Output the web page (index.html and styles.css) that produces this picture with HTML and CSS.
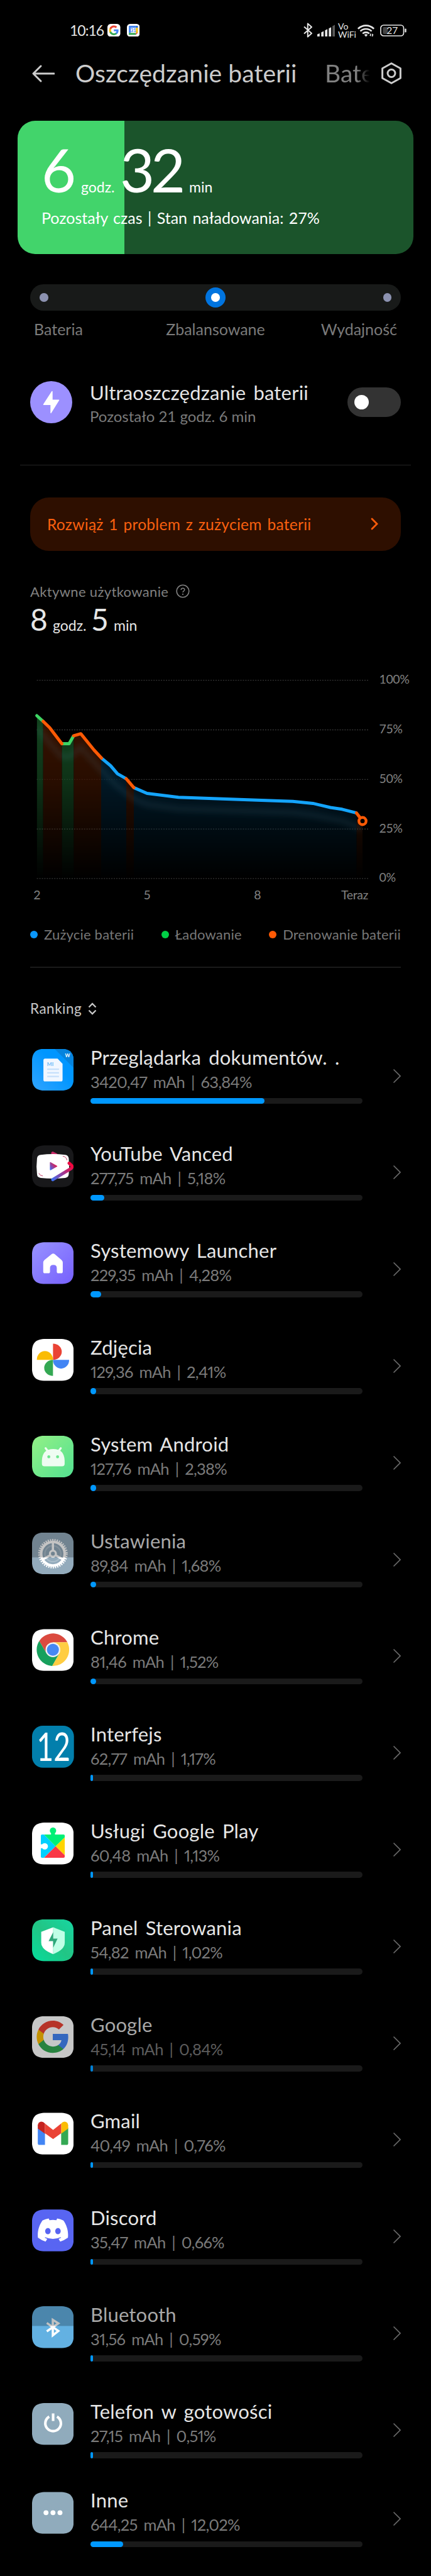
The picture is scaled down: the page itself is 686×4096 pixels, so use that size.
FILE: index.html
```html
<!DOCTYPE html>
<html lang="pl">
<head>
  <meta charset="UTF-8" />
  <title>Oszczędzanie baterii</title>
  <link rel="stylesheet" href="styles.css">
</head>
<body>
  <!-- Shared shapes -->
  <svg class="defs" width="0" height="0">
    <defs>
      <symbol id="chevron" viewBox="0 0 12 22"><path d="M1 1l10 10L1 21" fill="none" stroke="currentColor" stroke-width="1.7" stroke-linecap="round"/></symbol>
      <symbol id="google" viewBox="0 0 48 48">
        <path fill="#4285f4" d="M45.12 24.5c0-1.56-.14-3.06-.4-4.5H24v8.51h11.84c-.51 2.75-2.06 5.08-4.39 6.64v5.52h7.11c4.16-3.83 6.56-9.47 6.56-16.17z"/>
        <path fill="#34a853" d="M24 46c5.94 0 10.92-1.97 14.56-5.33l-7.11-5.52c-1.97 1.32-4.49 2.1-7.45 2.1-5.73 0-10.58-3.87-12.31-9.07H4.34v5.7C7.96 41.07 15.4 46 24 46z"/>
        <path fill="#fbbc05" d="M11.69 28.18C11.25 26.86 11 25.45 11 24s.25-2.86.69-4.18v-5.7H4.34C2.85 17.09 2 20.45 2 24s.85 6.91 2.34 9.88l7.35-5.7z"/>
        <path fill="#ea4335" d="M24 10.75c3.23 0 6.13 1.11 8.41 3.29l6.31-6.31C34.91 4.18 29.93 2 24 2 15.4 2 7.96 6.93 4.34 14.12l7.35 5.7c1.73-5.2 6.58-9.07 12.31-9.07z"/>
      </symbol>
    </defs>
  </svg>

  <!-- Status bar -->
  <div class="statusbar">
    <span class="clock">10:16</span>
    <svg class="notif" viewBox="0 0 20 20"><rect width="20" height="20" rx="5" fill="#fff"/><use href="#google" x="1.8" y="1.8" width="16.4" height="16.4"/></svg>
    <svg class="notif notif-cal" viewBox="0 0 20 20"><rect width="20" height="20" rx="5" fill="#fff"/><path fill="#4285f4" d="M3 3h11v3H6v8H3z"/><path fill="#1a67d2" d="M14 3h3v3h-3z"/><path fill="#fbbc04" d="M14 6h3v8h-3z"/><path fill="#34a853" d="M3 14h11v3H3z"/><path fill="#ea4335" d="M14 14h3l-3 3z"/><text x="10" y="12.8" class="cal-day">31</text></svg>
    <div class="status-icons">
      <svg class="s-bt" viewBox="0 0 14 24"><path d="M1 6.5l12 10.5-6.2 5.5V1.5L13 7 1 17.5" fill="none" stroke="#e6e6e6" stroke-width="2" stroke-linejoin="round"/></svg>
      <svg class="s-signal" viewBox="0 0 28 19"><path fill="#e6e6e6" d="M0 15.5l3.8-1.6V19H0zM6.3 12.5l3.8-2V19H6.3zM12.3 9.3l3.8-2V19h-3.8zM18.3 6.2l3.8-2V19h-3.8z"/><path fill="#5a5a5a" d="M24.2 2.5L28 .5V19h-3.8z"/></svg>
      <div class="s-vo"><span>Vo</span><span>WiFi</span></div>
      <svg class="s-wifi" viewBox="0 0 27 21"><g fill="none" stroke="#e6e6e6" stroke-width="2.6"><path d="M.9 7.8a18 18 0 0 1 25.2 0"/><path d="M4.5 11.6a13 13 0 0 1 18 0"/><path d="M8.2 15.4a8 8 0 0 1 10.6 0"/></g><path fill="#e6e6e6" d="M10.7 17.2q2.8-2 5.6 0l-2.8 3.3zM20 15.5h1.5V20L18.6 17.8H20zM23 20v-4.7l3 2.4h-1.5V20z"/></svg>
      <svg class="s-battery" viewBox="0 0 42 19"><rect x="1" y="1" width="36.5" height="17" rx="4.5" fill="none" stroke="#e6e6e6" stroke-width="1.7"/><rect x="4.3" y="4" width="8" height="11" rx="2" fill="#444"/><rect x="39.3" y="6.5" width="2.4" height="6" rx="1" fill="#e6e6e6"/><text x="19.3" y="15.1" class="bat-num">27</text></svg>
    </div>
  </div>

  <!-- Header -->
  <div class="header">
    <svg class="back" viewBox="0 0 36 28"><path d="M14 2L2 14l12 12M2 14h33" fill="none" stroke="#ccc" stroke-width="2.9" stroke-linecap="round" stroke-linejoin="round"/></svg>
    <h1 class="tab-title">Oszczędzanie baterii</h1>
    <span class="tab-next">Bate</span>
    <svg class="gear" viewBox="0 0 32 35"><path d="M16 1.8L30.4 9.7V25.3L16 33.2 1.6 25.3V9.7z" fill="none" stroke="#ccc" stroke-width="3" stroke-linejoin="round"/><circle cx="16" cy="17.5" r="6" fill="none" stroke="#ccc" stroke-width="3"/></svg>
  </div>

  <!-- Remaining time card -->
  <div class="card">
    <div class="card-time">
      <span class="big">6</span><span class="unit">godz.</span><span class="big big-min">32</span><span class="unit">min</span>
    </div>
    <div class="card-sub">Pozostały czas | Stan naładowania: 27%</div>
  </div>

  <!-- Mode slider -->
  <div class="slider">
    <span class="dot"></span>
    <span class="thumb"><span class="dot"></span></span>
    <span class="dot"></span>
  </div>
  <div class="slider-labels">
    <span>Bateria</span><span>Zbalansowane</span><span>Wydajność</span>
  </div>

  <!-- Ultra saver -->
  <div class="ultra">
    <svg class="ultra-icon" viewBox="0 0 67 67"><circle cx="33.5" cy="33.5" r="33.5" fill="#9c90ff"/><path d="M35 16.5v13.6h10.6L33 50.5V37.2H21.5z" fill="#fff" stroke="#fff" stroke-width="1.4" stroke-linejoin="round"/></svg>
    <div class="ultra-text">
      <div class="title">Ultraoszczędzanie baterii</div>
      <div class="ultra-sub">Pozostało 21 godz. 6 min</div>
    </div>
    <div class="toggle"><span class="knob"></span></div>
  </div>
  <div class="divider"></div>

  <!-- Problem banner -->
  <div class="banner">
    <span>Rozwiąż 1 problem z zużyciem baterii</span>
    <svg class="banner-arrow" viewBox="0 0 12 20"><path d="M2 2l8 8-8 8" fill="none" stroke="#ff5c0a" stroke-width="2.8" stroke-linecap="round"/></svg>
  </div>

  <!-- Usage -->
  <div class="usage-label">
    <span>Aktywne użytkowanie</span>
    <svg viewBox="0 0 22 22"><circle cx="11" cy="11" r="9.8" fill="none" stroke="#808080" stroke-width="1.6"/><path d="M8.2 9c0-3.8 5.6-3.6 5.6-.3 0 2-2.8 2-2.8 4.3" fill="none" stroke="#808080" stroke-width="1.5"/><circle cx="11" cy="15.9" r="1.1" fill="#808080"/></svg>
  </div>
  <div class="usage-time">
    <span class="mid">8</span><span class="unit">godz.</span><span class="mid">5</span><span class="unit">min</span>
  </div>

  <svg class="chart" viewBox="0 1060 686 380">
    <defs>
      <linearGradient id="fade" gradientUnits="userSpaceOnUse" x1="0" y1="1138" x2="0" y2="1397"><stop offset="0" stop-color="#fff"/><stop offset=".4" stop-color="#bbb"/><stop offset="1" stop-color="#000"/></linearGradient>
      <mask id="fadeMask" maskUnits="userSpaceOnUse" x="0" y="1060" width="686" height="380"><rect y="1060" width="686" height="380" fill="url(#fade)"/></mask>
      <clipPath id="area"><path d="M58.6 1138L68.7 1147 79 1157 98.4 1182.6H110L117.3 1169.8 128.6 1166.7 149.6 1192.5 161.4 1205.3 176 1217.5 187 1230.3 200.8 1238.2 213 1252.4 234 1261.5 284 1267.8 409 1272.3 466 1274.3 498 1277.4 526 1284 544.7 1286.8 567.4 1292.7 577 1305.5V1397H58.6z"/></clipPath>
      <filter id="soft" x="-10%" y="-30%" width="120%" height="160%"><feGaussianBlur stdDeviation="5"/></filter>
    </defs>
    <g stroke="#343434" stroke-width="1.4" stroke-dasharray="2 1.95">
      <path d="M58.6 1081.6H586M58.6 1160.5H586M58.6 1239.4H586M58.6 1318.3H586M58.6 1396.9H586"/>
    </g>
    <g clip-path="url(#area)">
      <g mask="url(#fadeMask)">
        <path fill="#154a22" fill-opacity=".92" d="M58.6 1130h10.1v267H58.6zM98.4 1130h19v267h-19z"/>
        <path fill="#3c1400" fill-opacity=".92" d="M68.7 1130h29.7v267H68.7zM117.4 1130H161v267h-43.6zM201 1130h12v267h-12zM567.4 1130H577v267h-9.6z"/>
        <path fill="#012336" fill-opacity=".92" d="M161 1130h40v267h-40zM213 1130h354.4v267H213z"/>
      </g>
      <path d="M58 1157L98 1203H112L128 1188 161 1224 187 1250 213 1270 234 1279 284 1286 409 1290 466 1292 498 1296 545 1305 577 1318" fill="none" stroke="#4a8a9a" stroke-opacity=".16" stroke-width="8" filter="url(#soft)"/>
    </g>
    <g fill="none" stroke-width="5" stroke-linejoin="round">
      <path stroke="#3dd463" stroke-linecap="round" d="M58.6 1138L68.7 1147"/>
      <path stroke="#3dd463" d="M98.4 1182.6H110L117.3 1169.8"/>
      <path stroke="#14a5ff" d="M161.4 1205.3L176 1217.5 187 1230.3 200.8 1238.2M213 1252.4L234 1261.5 284 1267.8 409 1272.3 466 1274.3 498 1277.4 526 1284 544.7 1286.8 567.4 1292.7"/>
      <path stroke="#ff5a05" stroke-linecap="round" d="M68.7 1147L79 1157 98.4 1182.6M117.3 1169.8L128.6 1166.7 149.6 1192.5 161.4 1205.3M200.8 1238.2L213 1252.4M567.4 1292.7L573 1300"/>
      <circle cx="577" cy="1305.5" r="5.7" stroke="#ff5a05" stroke-width="4.4" fill="#000"/>
    </g>
    <g class="axis">
      <text x="603.5" y="1087.2">100%</text>
      <text x="603.5" y="1166">75%</text>
      <text x="603.5" y="1244.8">50%</text>
      <text x="603.5" y="1323.6">25%</text>
      <text x="603.5" y="1402.4">0%</text>
      <text x="58.6" y="1430" text-anchor="middle">2</text>
      <text x="234" y="1430" text-anchor="middle">5</text>
      <text x="409.6" y="1430" text-anchor="middle">8</text>
      <text x="586" y="1430" text-anchor="end">Teraz</text>
    </g>
  </svg>

  <div class="legend">
    <span class="blue">Zużycie baterii</span>
    <span class="green">Ładowanie</span>
    <span class="orange">Drenowanie baterii</span>
  </div>
  <div class="divider divider-inner"></div>

  <div class="ranking">
    <span>Ranking</span>
    <svg viewBox="0 0 14 20"><path d="M1.5 7.5L7 2l5.5 5.5M1.5 12.5L7 18l5.5-5.5" fill="none" stroke="#c8c8c8" stroke-width="2.3"/></svg>
  </div>

  <!-- App list -->
  <div class="apps">
    <div class="app">
      <svg class="icon" viewBox="0 0 105 105"><defs><linearGradient id="doc" x1="0" y1="1" x2=".6" y2=".4"><stop offset="0" stop-color="#32a4ff"/><stop offset="1" stop-color="#0096ff"/></linearGradient></defs><rect width="105" height="105" fill="url(#doc)"/><path d="M57 0h48v48z" fill="#0583dd"/><text x="89" y="20.5" class="doc-w">W</text><path d="M32 24h32l12.5 13v40a4 4 0 0 1-4 4h-40a4 4 0 0 1-4-4V28a4 4 0 0 1 3.5-4z" fill="#f1f7ff"/><text x="37.5" y="43" class="doc-mi">MI</text><path d="M38 50.5h29.5M38 59.7h29.5M38 68.8h29.5" stroke="#c6e0fb" stroke-width="3.6"/></svg>
      <div class="app-body"><div class="title">Przeglądarka dokumentów. .</div><div class="sub">3420,47 mAh | 63,84%</div><div class="bar"><div class="fill" style="width: 64%"></div></div></div>
      <svg class="chev"><use href="#chevron"/></svg>
    </div>
    <div class="app">
      <svg class="icon" viewBox="0 0 105 105"><defs><linearGradient id="van" gradientUnits="userSpaceOnUse" x1="52" y1="88" x2="98" y2="48"><stop offset="0" stop-color="#3f6ff0"/><stop offset="1" stop-color="#f5063c"/></linearGradient><linearGradient id="van2" x1="0" y1="1" x2=".9" y2=".2"><stop offset="0" stop-color="#3f6ff0"/><stop offset="1" stop-color="#f0103f"/></linearGradient></defs><rect width="105" height="105" fill="#18181a"/><path d="M52 20l8 4" stroke="#c92a68" stroke-width="8" stroke-linecap="round"/><path d="M22 24Q52 20 83 24 91 25 92 33 94 53 92 73 91 81 83 82 52 85 22 82 13 81 12.5 73 10 53 12.5 33 13 25 22 24z" fill="#fff"/><path d="M93 45L98.5 50Q102.500 54 98 58L52 86" fill="none" stroke="url(#van)" stroke-width="8" stroke-linecap="round"/><path d="M46 43.5v18l16-9z" fill="url(#van2)" stroke="url(#van2)" stroke-width="2.5" stroke-linejoin="round"/><path d="M77 27.5q9 1 10.5 10M17 70q2 6 10 7" fill="none" stroke="#c2315f" stroke-width="1.5"/></svg>
      <div class="app-body"><div class="title">YouTube Vanced</div><div class="sub">277,75 mAh | 5,18%</div><div class="bar"><div class="fill" style="width: 5%"></div></div></div>
      <svg class="chev"><use href="#chevron"/></svg>
    </div>
    <div class="app">
      <svg class="icon" viewBox="0 0 105 105"><defs><linearGradient id="home" x1="0" y1="0" x2="1" y2="1"><stop offset="0" stop-color="#9893ff"/><stop offset="1" stop-color="#7660fd"/></linearGradient></defs><rect width="105" height="105" fill="url(#home)"/><path d="M49 30.5q4-3.5 8 0L74 45q3 3 3 7v22q0 4-4 4h-7q-4 0-4-4v-9q0-8-8.500-8-8.500 0-8.500 8v9q0 4-4 4h-9q-4 0-4-4V52q0-4 3-7z" fill="#fff"/></svg>
      <div class="app-body"><div class="title">Systemowy Launcher</div><div class="sub">229,35 mAh | 4,28%</div><div class="bar"><div class="fill" style="width: 4%"></div></div></div>
      <svg class="chev"><use href="#chevron"/></svg>
    </div>
    <div class="app">
      <svg class="icon" viewBox="0 0 105 105"><rect width="105" height="105" fill="#fff"/><path fill="#ea4335" d="M52.5 11.8a22 20.2 0 0 1 0 40.4z"/><path fill="#fabc04" d="M12 52.2a20.2 22 0 0 1 40.5 0z"/><path fill="#4285f4" d="M52.5 52.2H93a20.2 22 0 0 1-40.5 0z"/><path fill="#34a853" d="M52.5 52.2v40.4a22 20.2 0 0 1 0-40.4z"/></svg>
      <div class="app-body"><div class="title">Zdjęcia</div><div class="sub">129,36 mAh | 2,41%</div><div class="bar"><div class="fill" style="width: 2%"></div></div></div>
      <svg class="chev"><use href="#chevron"/></svg>
    </div>
    <div class="app">
      <svg class="icon" viewBox="0 0 105 105"><defs><linearGradient id="andr" x1="0" y1="0" x2="1" y2="1"><stop offset="0" stop-color="#93f186"/><stop offset="1" stop-color="#52e091"/></linearGradient></defs><rect width="105" height="105" fill="url(#andr)"/><path d="M34 31l7 9M72 31l-7 9" stroke="#effcf2" stroke-width="5" stroke-linecap="round"/><path d="M24.7 62q1-29 28.5-29t28.5 29v8q0 6.5-6.5 6.5h-44q-6.5 0-6.5-6.5z" fill="#effcf2"/><circle cx="42" cy="52.6" r="3.7" fill="#6ce68c"/><circle cx="64" cy="52.6" r="3.7" fill="#6ce68c"/></svg>
      <div class="app-body"><div class="title">System Android</div><div class="sub">127,76 mAh | 2,38%</div><div class="bar"><div class="fill" style="width: 2%"></div></div></div>
      <svg class="chev"><use href="#chevron"/></svg>
    </div>
    <div class="app dim">
      <svg class="icon" viewBox="0 0 105 105"><rect width="105" height="105" fill="#93abbc"/><g transform="translate(52.3 52.7)" fill="none" stroke="#fff"><circle r="20" stroke-width="3.5" stroke-opacity=".22"/><circle r="34.5" stroke-width="5" stroke-dasharray="3 2.705"/><circle r="29.5" stroke-width="6.5"/><circle r="7.5" stroke-width="5.2"/><path stroke-width="5.5" d="M0-8v-20M7 4l18 10M-7 4l-18 10"/></g><rect width="105" height="62" fill-opacity=".23"/></svg>
      <div class="app-body"><div class="title">Ustawienia</div><div class="sub">89,84 mAh | 1,68%</div><div class="bar"><div class="fill" style="width: 2%"></div></div></div>
      <svg class="chev"><use href="#chevron"/></svg>
    </div>
    <div class="app">
      <svg class="icon" viewBox="0 0 105 105"><rect width="105" height="105" fill="#fff"/><g transform="translate(52.3 52.2)"><path fill="#db4a3f" d="M-34.2-22A40.7 40.7 0 0 1 36.2-18.6L0-18.5-16 9.25z"/><path fill="#ffcd42" d="M36.2-18.6A40.7 40.7 0 0 1-2 40.65L16 9.25 0-18.5z"/><path fill="#17a05d" d="M-2 40.65A40.7 40.7 0 0 1-34.2-22L-16 9.25H16z"/><circle r="18.5" fill="#f1f1f1"/><circle r="15" fill="#4688f3"/></g></svg>
      <div class="app-body"><div class="title">Chrome</div><div class="sub">81,46 mAh | 1,52%</div><div class="bar"><div class="fill" style="width: 2%"></div></div></div>
      <svg class="chev"><use href="#chevron"/></svg>
    </div>
    <div class="app">
      <svg class="icon icon-open" viewBox="0 0 105 105"><rect width="105" height="105" rx="27" fill="#027fac"/><text x="12" y="87.5" class="twelve" textLength="84" lengthAdjust="spacingAndGlyphs">12</text></svg>
      <div class="app-body"><div class="title">Interfejs</div><div class="sub">62,77 mAh | 1,17%</div><div class="bar"><div class="fill" style="width: 1%"></div></div></div>
      <svg class="chev"><use href="#chevron"/></svg>
    </div>
    <div class="app">
      <svg class="icon" viewBox="0 0 105 105"><rect width="105" height="105" fill="#fff"/><path fill="#00d0ff" d="M25 30h5l29 29.5L30 88h-5q-3 0-3-3V33q0-3 3-3z"/><path fill="#00f076" d="M30 30h17q2-1 0-4a8 8 0 1 1 11 0q-2 3 0 4h21q3 0 3 3v4L59 59.5z"/><path fill="#ffd500" d="M82 37v45L59 59.5z"/><path fill="#f93846" d="M30 88l29-28.5L82 82v3q0 3-3 3z"/><path fill="#fff" d="M21 54q4 2 7-1.500a8 8 0 1 1 0 14Q25 63 21 65z"/></svg>
      <div class="app-body"><div class="title">Usługi Google Play</div><div class="sub">60,48 mAh | 1,13%</div><div class="bar"><div class="fill" style="width: 1%"></div></div></div>
      <svg class="chev"><use href="#chevron"/></svg>
    </div>
    <div class="app">
      <svg class="icon" viewBox="0 0 105 105"><defs><linearGradient id="sec" x1="0" y1="1" x2="1" y2="0"><stop offset="0" stop-color="#05dd9c"/><stop offset=".5" stop-color="#22c585"/><stop offset="1" stop-color="#17d6a2"/></linearGradient></defs><rect width="105" height="105" fill="url(#sec)"/><path fill="#fff" d="M53 19.5L23 31v27q0 18 30 29z"/><path fill="#bfffe6" d="M53 19.5L82 31v27q0 18-29 29z"/><path fill="#2ea77a" d="M53 32v16h11L53 71V54.5H41.5z"/></svg>
      <div class="app-body"><div class="title">Panel Sterowania</div><div class="sub">54,82 mAh | 1,02%</div><div class="bar"><div class="fill" style="width: 1%"></div></div></div>
      <svg class="chev"><use href="#chevron"/></svg>
    </div>
    <div class="app dim dim-all">
      <svg class="icon" viewBox="0 0 105 105"><rect width="105" height="105" fill="#fff"/><use href="#google" x="8" y="7.5" width="88" height="88"/><rect width="105" height="105" fill-opacity=".22"/></svg>
      <div class="app-body"><div class="title">Google</div><div class="sub">45,14 mAh | 0,84%</div><div class="bar"><div class="fill" style="width: 1%"></div></div></div>
      <svg class="chev"><use href="#chevron"/></svg>
    </div>
    <div class="app">
      <svg class="icon" viewBox="0 0 105 105"><rect width="105" height="105" fill="#fff"/><path fill="#4285f4" d="M14.4 38l18 13v30h-14q-4 0-4-4z"/><path fill="#34a853" d="M90.6 38L73 51v30h13.6q4 0 4-4z"/><path fill="#c5221f" d="M14.4 40v-8q1-8 9-9 5 0 9 4.5V53z"/><path fill="#fbbc04" d="M90.6 40v-8q-1-8-9-9-5 0-8.600 4.5V53z"/><path fill="#ea4335" d="M32.3 27.5l20.5 16L73 27.5V52L52.8 66.5 32.3 52z"/></svg>
      <div class="app-body"><div class="title">Gmail</div><div class="sub">40,49 mAh | 0,76%</div><div class="bar"><div class="fill" style="width: 1%"></div></div></div>
      <svg class="chev"><use href="#chevron"/></svg>
    </div>
    <div class="app">
      <svg class="icon" viewBox="0 0 105 105"><rect width="105" height="105" fill="#5865f2"/><path transform="translate(14.4 23) scale(.597)" fill="#fff" d="M107.7,8.07A105.15,105.15,0,0,0,81.47,0a72.06,72.06,0,0,0-3.36,6.83A97.68,97.68,0,0,0,49,6.83,72.37,72.37,0,0,0,45.64,0,105.89,105.89,0,0,0,19.39,8.09C2.79,32.65-1.71,56.6.54,80.21h0A105.73,105.73,0,0,0,32.71,96.36,77.7,77.7,0,0,0,39.6,85.25a68.42,68.42,0,0,1-10.85-5.18c.91-.66,1.8-1.34,2.66-2a75.57,75.57,0,0,0,64.32,0c.87.71,1.76,1.39,2.66,2a68.68,68.68,0,0,1-10.87,5.19,77,77,0,0,0,6.89,11.1A105.25,105.25,0,0,0,126.6,80.22h0C129.24,52.84,122.09,29.11,107.7,8.07ZM42.45,65.69C36.18,65.69,31,60,31,53s5-12.74,11.43-12.74S54,46,53.89,53,48.84,65.69,42.45,65.69Zm42.24,0C78.41,65.69,73.25,60,73.25,53s5-12.74,11.44-12.74S96.23,46,96.12,53,91.08,65.69,84.69,65.69Z"/></svg>
      <div class="app-body"><div class="title">Discord</div><div class="sub">35,47 mAh | 0,66%</div><div class="bar"><div class="fill" style="width: 1%"></div></div></div>
      <svg class="chev"><use href="#chevron"/></svg>
    </div>
    <div class="app dim">
      <svg class="icon" viewBox="0 0 105 105"><rect width="105" height="105" fill="#63b1e2"/><path d="M37 42l29 20-14 11V34l14 9-29 20" fill="none" stroke="#fff" stroke-width="5.5"/><rect width="105" height="49.5" fill-opacity=".24"/></svg>
      <div class="app-body"><div class="title">Bluetooth</div><div class="sub">31,56 mAh | 0,59%</div><div class="bar"><div class="fill" style="width: 1%"></div></div></div>
      <svg class="chev"><use href="#chevron"/></svg>
    </div>
    <div class="app app-short">
      <svg class="icon" viewBox="0 0 105 105"><rect width="105" height="105" fill="#90abbc"/><path d="M43 34a19.5 19.5 0 1 0 19.6 0M52.8 26v19" fill="none" stroke="#fff" stroke-width="6.5"/></svg>
      <div class="app-body"><div class="title">Telefon w gotowości</div><div class="sub">27,15 mAh | 0,51%</div><div class="bar"><div class="fill" style="width: 1%"></div></div></div>
      <svg class="chev"><use href="#chevron"/></svg>
    </div>
    <div class="app">
      <svg class="icon" viewBox="0 0 105 105"><rect width="105" height="105" fill="#90abbc"/><g fill="#fff"><circle cx="35" cy="52.5" r="6.2"/><circle cx="52.5" cy="52.5" r="6.2"/><circle cx="70" cy="52.5" r="6.2"/></g></svg>
      <div class="app-body"><div class="title">Inne</div><div class="sub">644,25 mAh | 12,02%</div><div class="bar"><div class="fill" style="width: 12%"></div></div></div>
      <svg class="chev"><use href="#chevron"/></svg>
    </div>
  </div>
</body>
</html>
```
FILE: styles.css
```css
* {
  box-sizing: border-box;
}
body {
  margin: 0;
  width: 686px;
  height: 4096px;
  overflow: hidden;
  background: #000;
  color: #e6e6e6;
  font-family: Lato, "Noto Sans", sans-serif;
  white-space: nowrap;
}
svg {
  display: block;
  flex: none;
}
.defs {
  position: absolute;
}

/* Status bar */
.statusbar {
  display: flex;
  align-items: center;
  height: 96px;
  padding: 0 39px 0 111px;
}
.clock {
  width: 60px;
  font-size: 23px;
  letter-spacing: -1px;
}
.notif {
  width: 20.5px;
  height: 20.5px;
}
.notif-cal {
  margin-left: 10px;
}
.cal-day {
  font-size: 7.5px;
  font-weight: bold;
  text-anchor: middle;
  fill: #4285f4;
}
.status-icons {
  display: flex;
  align-items: center;
  margin-left: auto;
}
.s-bt {
  width: 14px;
  height: 24px;
}
.s-signal {
  width: 28px;
  height: 19px;
  margin-left: 8px;
}
.s-vo {
  display: flex;
  flex-direction: column;
  width: 27px;
  margin-left: 5px;
  font-size: 14px;
  line-height: 13px;
}
.s-wifi {
  width: 27px;
  height: 21px;
  margin-left: 4px;
}
.s-battery {
  width: 42px;
  height: 19px;
  margin-left: 9px;
}
.bat-num {
  font-size: 15.5px;
  text-anchor: middle;
  fill: #e6e6e6;
}

/* Header */
.header {
  display: flex;
  align-items: center;
  height: 41px;
  padding-left: 51px;
  color: #ccc;
}
.back {
  width: 36px;
  height: 28px;
}
.tab-title {
  width: 397px;
  margin: 0 0 0 33px;
  font-size: 39px;
  font-weight: normal;
  line-height: 39px;
  letter-spacing: 0.1px;
}
.tab-next {
  width: 73px;
  color: #808080;
  font-size: 39px;
  line-height: 39px;
  -webkit-mask-image: linear-gradient(90deg, #000 70%, transparent 98%);
  mask-image: linear-gradient(90deg, #000 70%, transparent 98%);
}
.gear {
  width: 32px;
  height: 35px;
  margin-left: 17px;
}

/* Remaining time card */
.card {
  width: 630px;
  height: 212px;
  margin: 54.5px auto 0;
  padding: 27.5px 0 0 38px;
  border-radius: 28px;
  background: linear-gradient(90deg, #42d46b 27%, #1b542b 27%);
  color: #fff;
}
.card-time {
  display: flex;
  align-items: baseline;
  height: 100px;
  line-height: 100px;
}
.big {
  width: 63px;
  font-size: 95px;
}
.unit {
  width: 62px;
  font-size: 23px;
}
.big-min {
  width: 110px;
  letter-spacing: -6px;
}
.card-sub {
  margin-top: 12px;
  font-size: 25px;
  line-height: 30px;
  word-spacing: 2px;
}

/* Mode slider */
.slider {
  display: flex;
  align-items: center;
  justify-content: space-between;
  width: 590px;
  height: 42px;
  margin: 48.5px auto 0;
  padding: 0 15px;
  border-radius: 21px;
  background: #181a19;
}
.dot {
  width: 13.5px;
  height: 13.5px;
  border-radius: 50%;
  background: #8c92b0;
}
.thumb {
  display: flex;
  align-items: center;
  justify-content: center;
  width: 32px;
  height: 32px;
  border-radius: 50%;
  background: #0074df;
}
.thumb .dot {
  background: #fff;
}
.slider-labels {
  display: grid;
  grid-template-columns: 1fr auto 1fr;
  margin: 13.5px 54px 0;
  color: #7a7a7a;
  font-size: 25px;
  line-height: 30px;
}
.slider-labels span:last-child {
  text-align: right;
}

/* Ultra saver */
.ultra {
  display: flex;
  height: 67px;
  margin: 68px 48px 0;
}
.ultra-icon {
  width: 67px;
  height: 67px;
}
.ultra-text {
  margin: -1px 0 0 28px;
}
.ultra-sub {
  color: #7a7a7a;
  font-size: 24px;
  line-height: 38px;
}
.toggle {
  display: flex;
  align-items: center;
  align-self: center;
  width: 85px;
  height: 47px;
  margin-left: auto;
  padding-left: 11px;
  border-radius: 24px;
  background: #333;
}
.knob {
  width: 23px;
  height: 23px;
  border-radius: 50%;
  background: #fff;
}
.divider {
  height: 1px;
  margin: 66.5px 32px 0;
  background: #242424;
}
.divider-inner {
  height: 2px;
  margin: 36px 48px 0;
  background: #1a1a1a;
}

/* Problem banner */
.banner {
  display: flex;
  align-items: center;
  justify-content: space-between;
  height: 85.5px;
  margin: 50.5px 48px 0;
  padding: 0 36px 0 27px;
  border-radius: 30px;
  background: #2e0f00;
  color: #f9600f;
  font-size: 24.5px;
  letter-spacing: 0.3px;
  word-spacing: 2px;
}
.banner-arrow {
  width: 12px;
  height: 20px;
}

/* Usage */
.usage-label {
  display: flex;
  align-items: center;
  gap: 12px;
  height: 30px;
  margin: 49px 48px 0;
  color: #808080;
  font-size: 22px;
  letter-spacing: 0.35px;
}
.usage-label svg {
  width: 22px;
  height: 22px;
}
.usage-time {
  display: flex;
  align-items: baseline;
  height: 50px;
  margin: 5px 48px 0;
  line-height: 50px;
}
.mid {
  width: 36px;
  font-size: 48px;
}
.usage-time .unit {
  width: 61px;
}
.chart {
  width: 686px;
  height: 380px;
  margin-top: 50px;
}
.axis {
  fill: #808080;
  font-size: 19.5px;
  letter-spacing: -0.4px;
}
.legend {
  display: flex;
  justify-content: space-between;
  height: 30px;
  margin: 31px 48px 0;
  color: #777;
  font-size: 22px;
  line-height: 30px;
  letter-spacing: 0.2px;
}
.legend span {
  display: flex;
  align-items: center;
  gap: 10px;
}
.legend span::before {
  content: "";
  width: 12px;
  height: 12px;
  border-radius: 50%;
}
.legend .blue::before {
  background: #0a98ff;
}
.legend .green::before {
  background: #00d046;
}
.legend .orange::before {
  background: #ff5a05;
}

/* App list */
.ranking {
  display: flex;
  align-items: center;
  gap: 10px;
  height: 30px;
  margin: 49.5px 48px 0;
  color: #c8c8c8;
  font-size: 22.5px;
  letter-spacing: 0.5px;
}
.ranking svg {
  width: 14px;
  height: 20px;
}
.apps {
  padding: 43px 48px 0 50.8px;
}
.app {
  display: flex;
  height: 153.82px;
}
.app-short {
  height: 141.6px;
}
.icon {
  width: 66.7px;
  height: 66.7px;
  margin-top: 6px;
  clip-path: path("M0 22C0 6 6 0 22 0H44.7C60.7 0 66.7 6 66.7 22V44.7C66.7 60.7 60.7 66.7 44.7 66.7H22C6 66.7 0 60.7 0 44.7Z");
}
.icon-open {
  overflow: visible;
  clip-path: none;
}
.app-body {
  width: 433.5px;
  margin-left: 26.5px;
}
.title {
  font-size: 31px;
  line-height: 38px;
  letter-spacing: 0.2px;
  word-spacing: 4px;
}
.sub {
  margin-top: 4px;
  color: #7a7a7a;
  font-size: 25.5px;
  line-height: 32px;
  letter-spacing: -0.7px;
  word-spacing: 4px;
  font-variant-numeric: proportional-nums;
}
.bar {
  height: 9.6px;
  margin-top: 10.3px;
  border-radius: 5px;
  background: #1a1a1a;
}
.fill {
  height: 100%;
  border-radius: 5px;
  background: #0098ff;
}
.chev {
  width: 12px;
  height: 22px;
  margin: 38px 0 0 auto;
  color: #6a6a6a;
}
.dim .title {
  color: #a8a8a8;
}
.dim-all .sub {
  color: #5c5c5c;
}
.dim-all .fill {
  background: #0080d6;
}
.doc-w {
  font-size: 12px;
  font-weight: bold;
  text-anchor: middle;
  fill: #fff;
}
.doc-mi {
  font-size: 13px;
  font-weight: 900;
  fill: #79bff9;
}
.twelve {
  font-size: 97px;
  fill: #fff;
}
```
